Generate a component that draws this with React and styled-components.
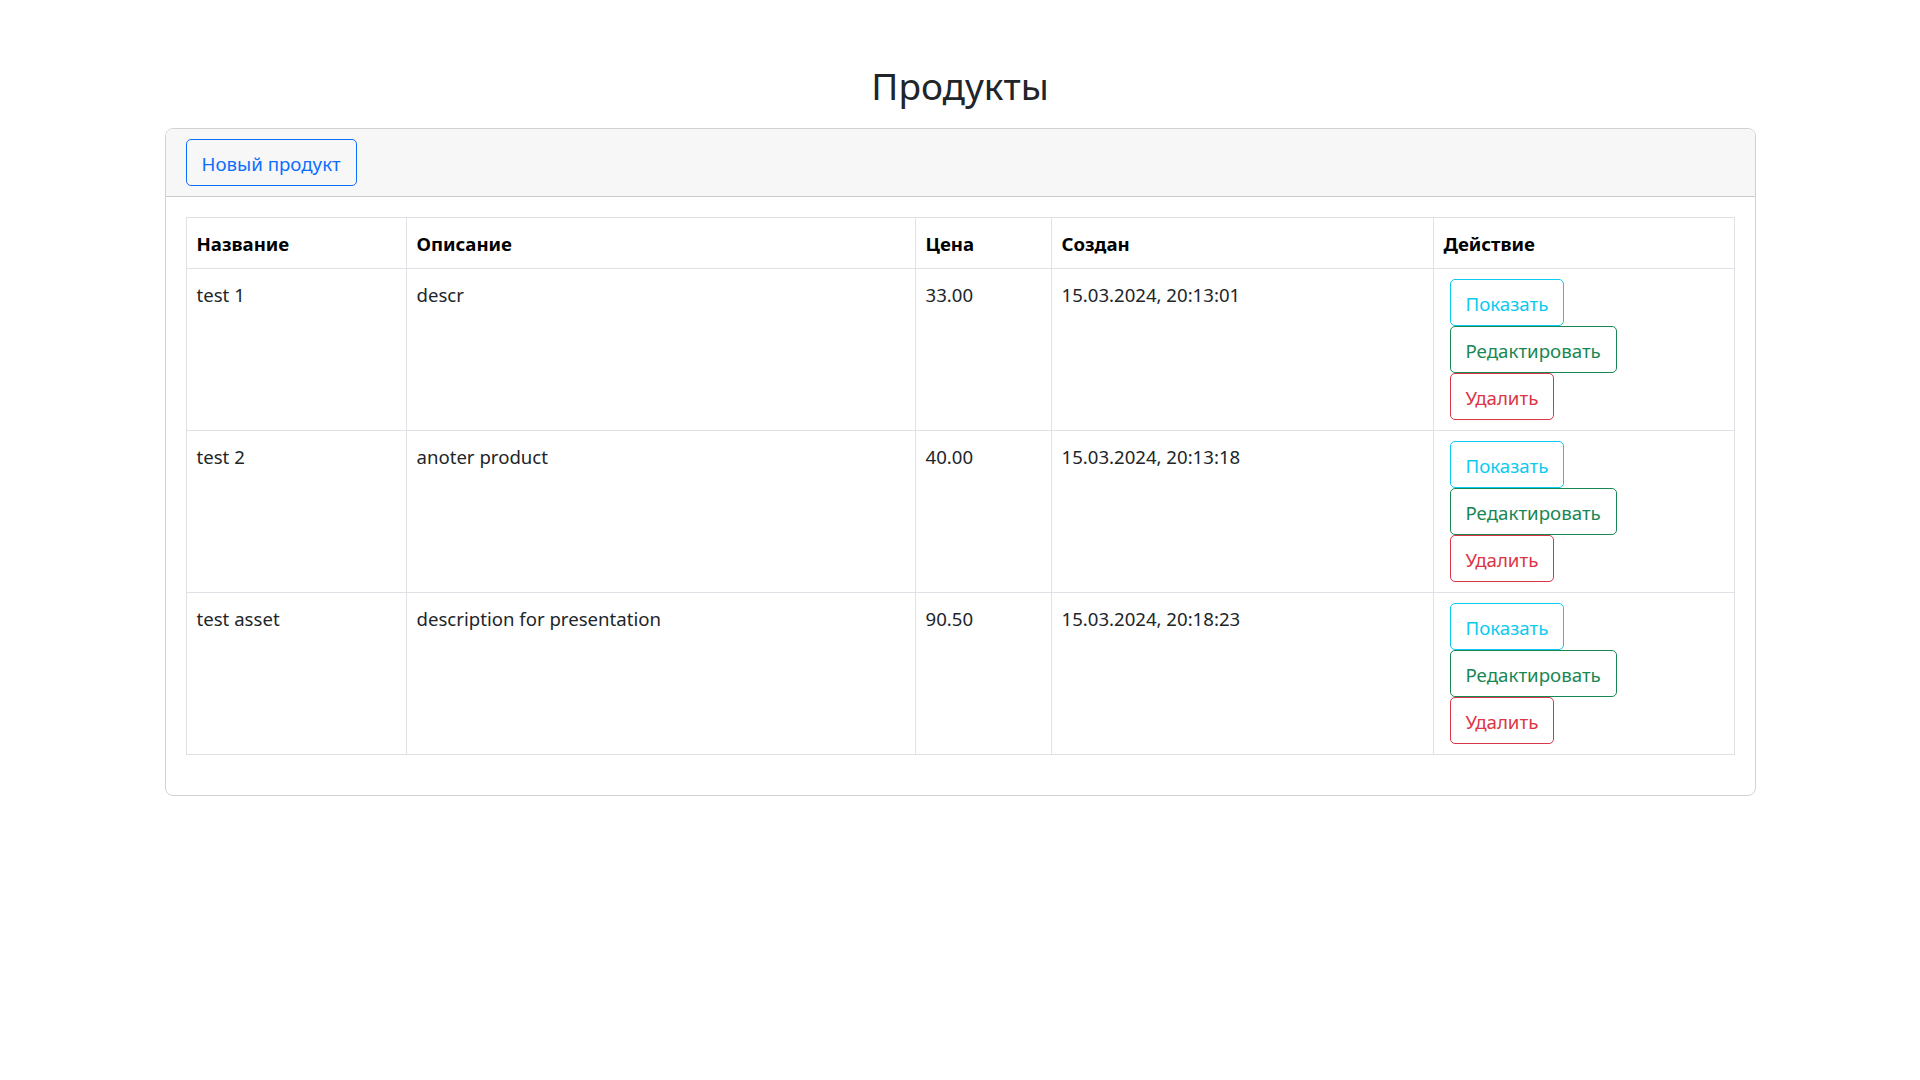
import styled, { createGlobalStyle } from 'styled-components'

const GlobalStyle = createGlobalStyle`
  body {
    margin: 0;
    background: #fff;
    color: #212529;
    font-family: 'Noto Sans', 'Open Sans', sans-serif;
  }
`

const Page = styled.main`
  padding-top: 62px;
`

const Title = styled.h2`
  margin: 0 0 18px;
  text-align: center;
  font-size: 37px;
  font-weight: 400;
  line-height: 48px;
  color: #212529;
`

const Card = styled.section`
  width: 1589px;
  margin: 0 auto;
  border: 1px solid rgba(0, 0, 0, 0.175);
  border-radius: 8px;
  overflow: hidden;
`

const CardHeader = styled.div`
  display: flex;
  align-items: center;
  padding: 10px 20px;
  background-color: #f7f7f7;
  border-bottom: 1px solid rgba(0, 0, 0, 0.175);
`

const CardBody = styled.div`
  padding: 20px;
`

const colors = {
  primary: '#0d6efd',
  info: '#0dcaf0',
  success: '#198754',
  danger: '#dc3545',
}

const OutlineButton = styled.button`
  display: inline-block;
  padding: 8.5px 15px 6.5px;
  font-family: inherit;
  font-size: 18.7px;
  line-height: 30px;
  color: ${(p) => colors[p.$variant]};
  background: transparent;
  border: 1px solid ${(p) => colors[p.$variant]};
  border-radius: 5px;
  cursor: pointer;
  white-space: nowrap;

  &:hover {
    color: #fff;
    background-color: ${(p) => colors[p.$variant]};
  }
`

const Table = styled.table`
  width: 100%;
  margin-bottom: 20px;
  border-collapse: collapse;
  table-layout: fixed;
  font-size: 18.6px;
  line-height: 30px;
  color: #212529;
`

const HeadCell = styled.th`
  padding: 11px 10px 9px;
  text-align: left;
  font-weight: 700;
  color: #000;
  border: 1px solid #dee2e6;
`

const Cell = styled.td`
  padding: 11px 10px 9px;
  vertical-align: top;
  border: 1px solid #dee2e6;
`

const Actions = styled.div`
  display: flex;
  flex-direction: column;
  align-items: flex-start;
  margin-top: -1px;
  padding: 0 0 1px 6px;
`

const products = [
  { name: 'test 1', description: 'descr', price: '33.00', created: '15.03.2024, 20:13:01' },
  { name: 'test 2', description: 'anoter product', price: '40.00', created: '15.03.2024, 20:13:18' },
  { name: 'test asset', description: 'description for presentation', price: '90.50', created: '15.03.2024, 20:18:23' },
]

function App() {
  return (
    <>
      <GlobalStyle />
      <Page>
        <Title>Продукты</Title>
        <Card>
          <CardHeader>
            <OutlineButton $variant='primary' type='button'>
              Новый продукт
            </OutlineButton>
          </CardHeader>
          <CardBody>
            <Table>
              <colgroup>
                <col style={{ width: 220 }} />
                <col style={{ width: 509 }} />
                <col style={{ width: 136 }} />
                <col style={{ width: 382 }} />
                <col />
              </colgroup>
              <thead>
                <tr>
                  <HeadCell>Название</HeadCell>
                  <HeadCell>Описание</HeadCell>
                  <HeadCell>Цена</HeadCell>
                  <HeadCell>Создан</HeadCell>
                  <HeadCell>Действие</HeadCell>
                </tr>
              </thead>
              <tbody>
                {products.map((product, index) => (
                  <tr key={index}>
                    <Cell>{product.name}</Cell>
                    <Cell>{product.description}</Cell>
                    <Cell>{product.price}</Cell>
                    <Cell>{product.created}</Cell>
                    <Cell>
                      <Actions>
                        <OutlineButton $variant='info' type='button'>
                          Показать
                        </OutlineButton>
                        <OutlineButton $variant='success' type='button'>
                          Редактировать
                        </OutlineButton>
                        <OutlineButton $variant='danger' type='button'>
                          Удалить
                        </OutlineButton>
                      </Actions>
                    </Cell>
                  </tr>
                ))}
              </tbody>
            </Table>
          </CardBody>
        </Card>
      </Page>
    </>
  )
}

export default App
